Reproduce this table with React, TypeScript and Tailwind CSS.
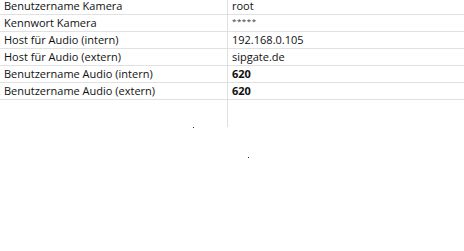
const rows: { label: string; value: string; bold?: boolean; masked?: boolean }[] = [
  { label: "Benutzername Kamera", value: "root" },
  { label: "Kennwort Kamera", value: "*****", masked: true },
  { label: "Host für Audio (intern)", value: "192.168.0.105" },
  { label: "Host für Audio (extern)", value: "sipgate.de" },
  { label: "Benutzername Audio (intern)", value: "620", bold: true },
  { label: "Benutzername Audio (extern)", value: "620", bold: true },
];

export default function App() {
  return (
    <div
      className="relative w-[464px] h-[251px] overflow-hidden bg-white text-[11px] text-[#111]"
      style={{ fontFamily: '"Open Sans", "Noto Sans", sans-serif' }}
    >
      <div className="flex flex-col">
        {rows.map((r, i) => (
          <div
            key={r.label}
            className={`flex border-b border-[#e1e1e1] ${i === 0 ? "h-[15px] leading-[12px]" : "h-[17px] leading-[16px]"}`}
          >
            <div className="w-[228px] shrink-0 border-r border-[#e1e1e1] pl-[4px]">{r.label}</div>
            {r.masked ? (
              <div className="pl-[4px] text-[8px] leading-[12px] tracking-[0.5px] text-[#333]">{r.value}</div>
            ) : (
              <div className={`pl-[4px] ${r.bold ? "font-bold" : ""}`}>{r.value}</div>
            )}
          </div>
        ))}
        <div className="flex h-[27px]">
          <div className="w-[228px] shrink-0 border-r border-[#e1e1e1]" />
        </div>
      </div>
      <div className="absolute left-[193px] top-[127px] h-px w-px bg-[#222]" />
      <div className="absolute left-[248px] top-[157px] h-px w-px bg-[#222]" />
    </div>
  );
}
